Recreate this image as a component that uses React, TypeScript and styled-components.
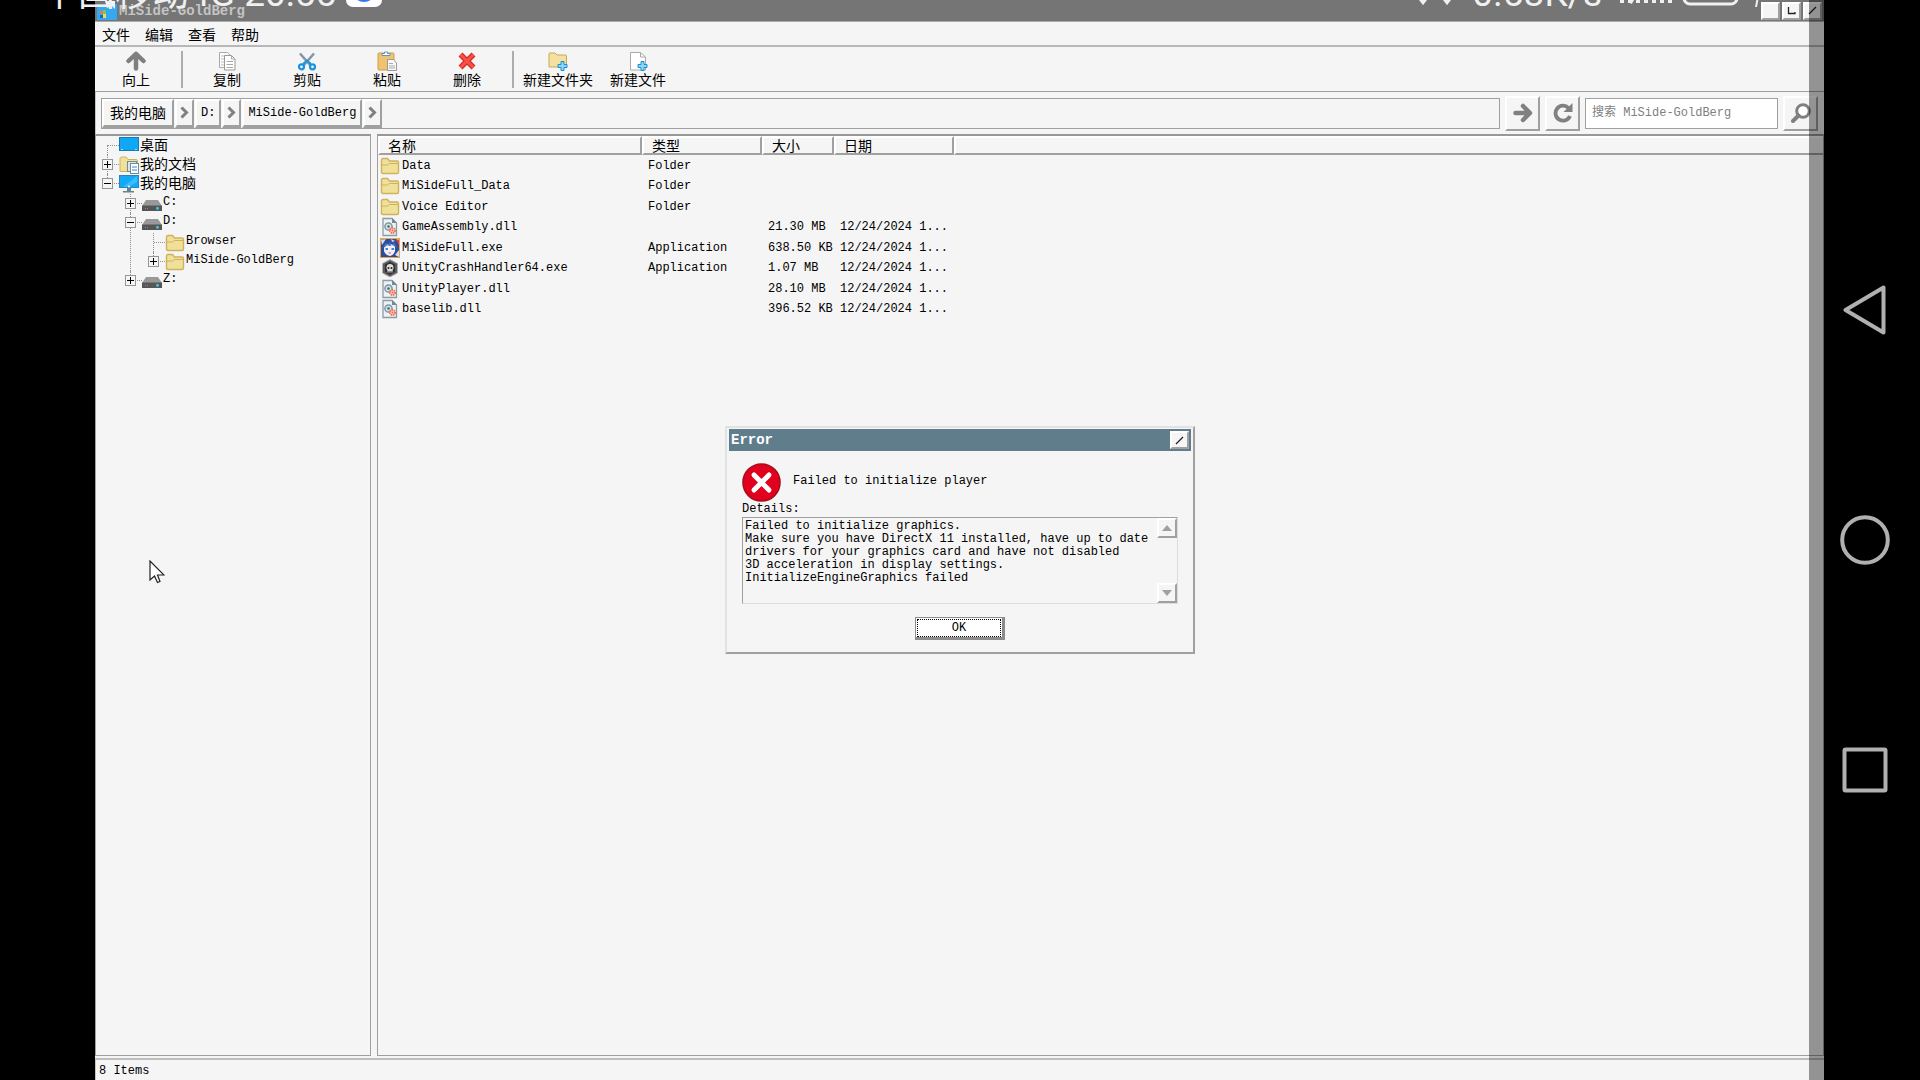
import React from "react";
import styled, { createGlobalStyle, css } from "styled-components";

const face = "#f5f5f5";
const edge = "#a0a0a0";
const latin = '"Liberation Mono", "Noto Sans CJK SC", monospace';
const han = '"Noto Sans CJK SC", "Liberation Mono", sans-serif';

const GlobalStyle = createGlobalStyle`
  *, *::before, *::after { box-sizing: border-box; }
  body { margin: 0; background: #000; color: #000; font: 12px/16px ${latin}; }
  button, input, textarea { font: inherit; color: inherit; margin: 0; border-radius: 0; }
  svg { display: block; flex: none; }
`;

const raised = css`
  background: ${face};
  border: 2px solid;
  border-color: #fff ${edge} ${edge} #fff;
`;

const Screen = styled.div`
  display: flex;
  height: 100vh;
  padding-left: 95px;
  position: relative;
  overflow: hidden;
`;

const Window = styled.main`
  flex: 1;
  min-width: 0;
  display: flex;
  flex-direction: column;
  background: ${face};
  position: relative;
`;

const EdgeShade = styled.div`
  position: absolute;
  inset: 0 0 0 auto;
  width: 15px;
  background: rgba(0, 0, 0, 0.4);
  pointer-events: none;
`;

/* Title bar */
const TitleBar = styled.header`
  display: flex;
  align-items: center;
  gap: 2px;
  height: 22px;
  padding: 0 2px;
  background: #757575;
  border-bottom: 1px solid #ababab;
`;

const TitleText = styled.h1`
  flex: 1;
  margin: 0;
  font-size: 14px;
  line-height: 16px;
  color: #c4c4c4;
`;

const CaptionButton = styled.button`
  ${raised}
  display: grid;
  place-items: center;
  width: 19px;
  height: 18px;
  padding: 0;
`;

/* Menu */
const MenuBar = styled.nav`
  display: flex;
  align-items: center;
  gap: 15px;
  height: 25px;
  padding: 0 7px;
  border-bottom: 2px solid #b8b8b8;
`;

const MenuButton = styled.button`
  padding: 0;
  border: 0;
  background: none;
  font: 14px/20px ${han};
`;

/* Toolbar */
const ToolBar = styled.div`
  display: flex;
  align-items: center;
  height: 45px;
  padding-left: 1px;
  border-bottom: 1px solid ${edge};
`;

const ToolButton = styled.button`
  display: flex;
  flex-direction: column;
  align-items: center;
  width: 80px;
  padding: 0;
  border: 0;
  background: none;
  font: 14px/16px ${han};
  white-space: nowrap;
`;

const ToolDivider = styled.div`
  width: 2px;
  height: 37px;
  margin: 0 4px 0 5px;
  background: #acacac;
`;

/* Address bar */
const AddressBar = styled.div`
  display: flex;
  align-items: center;
  gap: 5px;
  height: 42px;
  padding: 0 6px 0 5px;
  border-left: 1px solid #c4c4c4;
`;

const Crumbs = styled.div`
  flex: 1;
  display: flex;
  align-items: stretch;
  gap: 1px;
  height: 31px;
  border: 1px solid ${edge};
`;

const Crumb = styled.button<{ $han?: boolean }>`
  ${raised}
  border-bottom-width: 3px;
  padding: ${(p) => (p.$han ? "0 6px 2px" : "0 4px")};
  font-family: ${(p) => (p.$han ? han : latin)};
  font-size: ${(p) => (p.$han ? 14 : 12)}px;
  line-height: 16px;
`;

const CrumbArrow = styled.button`
  ${raised}
  border-bottom-width: 3px;
  display: grid;
  place-items: center;
  width: 19px;
  padding: 0;
`;

const SquareButton = styled.button`
  ${raised}
  display: grid;
  place-items: center;
  width: 35px;
  height: 35px;
  padding: 0;
`;

const SearchInput = styled.input`
  width: 193px;
  height: 31px;
  padding: 0 6px;
  border: 1px solid ${edge};
  background: #fff;
  outline: none;
  &::placeholder { color: #808080; opacity: 1; }
`;

/* Panes */
const Panes = styled.div`
  flex: 1;
  min-height: 0;
  display: flex;
  gap: 6px;
`;

const pane = css`
  border: 1px solid ${edge};
  border-top: 2px solid #989898;
`;

const TreePane = styled.aside`
  ${pane}
  width: 276px;
`;

const ListPane = styled.section`
  ${pane}
  flex: 1;
  min-width: 0;
`;

const TreeList = styled.ul<{ $nested?: boolean }>`
  list-style: none;
  margin: 0;
  margin-top: ${(p) => (p.$nested ? 1 : 0)}px;
  padding: 0 0 0 ${(p) => (p.$nested ? 23 : 0)}px;
`;

const TreeItem = styled.li<{ $line: "full" | "last" | "first" }>`
  position: relative;
  &::before {
    content: "";
    display: block;
    position: absolute;
    left: 11px;
    top: ${(p) => (p.$line === "first" ? 9 : 0)}px;
    bottom: ${(p) => (p.$line === "last" ? "auto" : 0)};
    height: ${(p) => (p.$line === "last" ? "10px" : "auto")};
    border-left: 1px dotted #909090;
  }
`;

const TreeRow = styled.div`
  display: flex;
  align-items: center;
  height: 19px;
`;

const Branch = styled.div`
  position: relative;
  display: grid;
  place-items: center;
  width: 23px;
  height: 19px;
  &::before {
    content: "";
    position: absolute;
    left: 12px;
    right: 0;
    top: 9px;
    border-top: 1px dotted #909090;
  }
`;

const Expander = styled.button`
  position: relative;
  display: grid;
  place-items: center;
  width: 11px;
  height: 11px;
  padding: 0;
  border: 1px solid #969696;
  background: ${face};
`;

const TreeLabel = styled.span<{ $han?: boolean }>`
  padding: 0 0 3px 1px;
  font-family: ${(p) => (p.$han ? han : latin)};
  font-size: ${(p) => (p.$han ? 14 : 12)}px;
  line-height: 16px;
`;

const FileTable = styled.table`
  width: 100%;
  table-layout: fixed;
  border-collapse: separate;
  border-spacing: 0;
`;

const HeadCell = styled.th`
  height: 19px;
  padding: 0 0 0 8px;
  border: 2px solid;
  border-color: #fff ${edge} ${edge} #fff;
  text-align: left;
  font: 14px/15px ${han};
  &:last-child { border-right: 0; }
`;

const FileRow = styled.tr`
  height: 20px;
  &:nth-child(odd) { height: 21px; }
`;

const Cell = styled.td`
  padding: 0 0 0 6px;
  white-space: nowrap;
  &:first-child { padding-left: 2px; }
`;

const FileName = styled.div`
  display: flex;
  align-items: center;
  gap: 2px;
  height: 20px;
`;

const StatusBar = styled.footer`
  height: 22px;
  margin-top: 2px;
  padding: 3px 3px 0;
  border-top: 2px solid #bebebe;
  border-left: 1px solid #c4c4c4;
  line-height: 16px;
`;

/* Error dialog */
const DialogLayer = styled.div`
  position: fixed;
  inset: 0;
  display: grid;
  place-items: center;
`;

const Dialog = styled.section`
  width: 470px;
  background: ${face};
  border: 2px solid;
  border-color: #e2e2e2 ${edge} ${edge} #e2e2e2;
  padding: 1px 2px 12px;
`;

const DialogTitle = styled.div`
  display: flex;
  align-items: center;
  justify-content: space-between;
  height: 22px;
  padding: 0 2px;
  background: #607d8b;
`;

const DialogHeading = styled.h2`
  margin: 0;
  font-size: 14px;
  line-height: 16px;
  color: #fff;
`;

const DialogBody = styled.div`
  padding: 12px 13px 0;
`;

const Message = styled.div`
  display: flex;
  gap: 12px;
  height: 39px;
`;

const MessageText = styled.p`
  margin: 0;
  padding-top: 10px;
`;

const DetailsLabel = styled.label`
  display: block;
  line-height: 15px;
`;

const DetailsBox = styled.div`
  display: flex;
  height: 87px;
  border: 1px solid;
  border-color: ${edge} #dcdcdc #dcdcdc ${edge};
`;

const DetailsText = styled.textarea`
  flex: 1;
  min-width: 0;
  padding: 2px;
  border: 0;
  background: none;
  outline: none;
  resize: none;
  overflow: hidden;
  line-height: 13px;
  white-space: pre;
`;

const Scroller = styled.div`
  display: flex;
  flex-direction: column;
  justify-content: space-between;
`;

const ScrollButton = styled.button`
  ${raised}
  display: grid;
  place-items: center;
  width: 20px;
  height: 20px;
  padding: 0;
`;

const OkButton = styled.button`
  display: block;
  width: 90px;
  height: 23px;
  margin: 13px auto 0;
  padding: 1px;
  border: 1px solid #8c8c8c;
  border-right-width: 3px;
  border-bottom-width: 3px;
  background: #fff;
`;

const OkFocus = styled.span`
  display: block;
  border: 1px dotted #000;
  line-height: 16px;
`;

/* Phone chrome */
const NavBar = styled.nav`
  display: flex;
  flex-direction: column;
  align-items: center;
  justify-content: center;
  gap: 180px;
  width: 96px;
  padding-right: 14px;
`;

const NavButton = styled.button`
  width: 50px;
  height: 50px;
  padding: 0;
  border: 0;
  background: none;
`;

const PhoneStatus = styled.div`
  position: absolute;
  top: -36px;
  left: 41px;
  right: 160px;
  height: 43px;
  display: flex;
  align-items: flex-end;
  justify-content: space-between;
  color: #f0f0f0;
  font: 37px/26px Roboto, "Noto Sans CJK SC", sans-serif;
`;

const StatusGroup = styled.div`
  display: flex;
  align-items: flex-end;
  gap: ${10}px;
`;

const SignalGroup = styled(StatusGroup)`
  gap: 18px;
`;

const PointerLayer = styled.div`
  position: absolute;
  left: 149px;
  top: 560px;
`;

const FolderIcon = () => (
  <svg width="20" height="18" viewBox="0 0 20 18">
    <path d="M1.500 15V3q0-1.500 1.500-1.500h4.500L9.500 4H17q1.500 0 1.500 1.500V15q0 1.500-1.500 1.500H3Q1.500 16.500 1.500 15Z" fill="#f0e19a" stroke="#d0b25e" strokeWidth="1.400" />
    <path d="M2 8h5.500l2-1.500H18" fill="none" stroke="#d0b25e" />
  </svg>
);

const DesktopIcon = () => (
  <svg width="20" height="17" viewBox="0 0 20 17">
    <rect x="0.500" y="0.500" width="19" height="13" fill="#10a8f4" stroke="#1979b8" />
    <path d="M2 12.500h16" stroke="#9bdcff" strokeDasharray="2 12 2" />
  </svg>
);

const DocumentsIcon = () => (
  <svg width="20" height="18" viewBox="0 0 20 18">
    <path d="M1 15.500V2.500Q1 1 3 1h4l2 2.500h8.500q1 0 1 1.500v10.500Z" fill="#f0e19a" stroke="#d0b25e" />
    <rect x="8.500" y="5.500" width="9" height="10" fill="#d8e6ee" stroke="#71899a" />
    <rect x="11.500" y="7.500" width="8" height="10" fill="#fff" stroke="#71899a" />
    <path d="M13 11h5M13 14h5" stroke="#3284b8" />
  </svg>
);

const ComputerIcon = () => (
  <svg width="20" height="18" viewBox="0 0 20 18">
    <rect x="0.500" y="0.500" width="19" height="12" fill="#13aaf4" stroke="#2786c0" />
    <path d="M18 1v6L9 12H4Z" fill="#3cbcfb" />
    <path d="M8 13h4v3h3v1.500H4V16h4Z" fill="#5f8496" />
    <circle cx="10" cy="11.500" r="1" fill="#fff" />
  </svg>
);

const DriveIcon = () => (
  <svg width="20" height="16" viewBox="0 0 20 16">
    <path d="M4 4h12l4 6H0Z" fill="#999" />
    <path d="M0 9.500h20V15H0Z" fill="#565656" />
    <path d="M3 12.500h4" stroke="#888" strokeDasharray="1 1" />
    <circle cx="15.500" cy="12.300" r="1.500" fill="#35c5e8" />
  </svg>
);

const DllIcon = () => (
  <svg width="20" height="20" viewBox="0 0 20 20">
    <path d="M3 1.500h9L16.500 6v12.500H3Z" fill="#eef2f4" stroke="#8a9da6" strokeWidth="1.300" />
    <path d="M12 1v5h5Z" fill="#718a96" />
    <circle cx="8.500" cy="9.500" r="3.600" fill="#d5e1e7" stroke="#7b98a7" strokeWidth="1.500" />
    <circle cx="8.500" cy="9.500" r="1.300" fill="#47677a" />
    <circle cx="12.500" cy="13.500" r="2.600" fill="#ffd5ca" stroke="#ef6c50" strokeWidth="1.800" strokeDasharray="1.500 0.700" />
    <circle cx="12.500" cy="13.500" r="1" fill="#ef6c50" />
  </svg>
);

const GameIcon = () => (
  <svg width="20" height="20" viewBox="0 0 20 20">
    <rect width="20" height="20" fill="#e5a64a" />
    <path d="M1 2 5 1h11l3 3v15H1Z" fill="#2b4d9d" />
    <path d="M4 8q6-4 11 0v5q-1 4-5 5-5-1-6-5Z" fill="#f9eef2" />
    <path d="m3 10 3-6 1 4 3-5 1 5 3-4 3 6-2-1-2-2-3 1-3-1-2 2Z" fill="#3f6cc4" />
    <path d="M5.500 11h2.500M11.500 11h2.500" stroke="#2d8cdf" strokeWidth="2" />
    <path d="m1 2 5-1-4 6ZM15 17l4-5v7ZM11 1l4 2-3 1Z" fill="#cfe0f8" />
    <path d="M16 2h3v5Z" fill="#df3c60" />
    <path d="M8.500 15h2.500" stroke="#d45472" />
  </svg>
);

const UnityIcon = () => (
  <svg width="20" height="20" viewBox="0 0 20 20">
    <path d="m10 1.500 7.500 4v9.500L10 19l-7.500-4V5.500Z" fill="#5b5b5b" stroke="#b0b0b0" />
    <path d="m10 4 5 2.500v7L10 17l-5-3.500v-7Z" fill="#303030" />
    <circle cx="10" cy="9.500" r="3.500" fill="#dcdcdc" />
    <path d="M7.500 12h5v2.500h-5Z" fill="#dcdcdc" />
    <circle cx="8.500" cy="10" r="1" fill="#222" />
    <circle cx="11.500" cy="10" r="1" fill="#222" />
    <path d="M9 13v2m2-2v2" stroke="#444" />
  </svg>
);

const UpIcon = () => (
  <svg width="20" height="20" viewBox="0 0 20 20">
    <path d="M10 17.500V4M2.500 10 10 2.800 17.500 10" fill="none" stroke="#808080" strokeWidth="4.500" strokeLinejoin="round" strokeLinecap="round" />
  </svg>
);

const CopyIcon = () => (
  <svg width="20" height="20" viewBox="0 0 20 20">
    <path d="M2.500 1.500h8l3 3v12h-11Z" fill="#fff" stroke="#aaa" />
    <path d="M4 5h4M4 8h3M4 11h3M4 14h3" stroke="#bbb" />
    <path d="M7.500 4.500h7l3.500 3.500v11H7.500Z" fill="#fff" stroke="#999" />
    <path d="M14.500 4.500V8H18M9.500 10.500h6.500M9.500 13.500h6.500M9.500 16.500h6.500" fill="none" stroke="#aaa" />
  </svg>
);

const CutIcon = () => (
  <svg width="20" height="20" viewBox="0 0 20 20">
    <path d="m3 2.500 10.500 12M17 2.500 6.500 14.500" stroke="#8497a5" strokeWidth="2.600" />
    <circle cx="4.500" cy="15.800" r="2.500" fill="none" stroke="#1994dc" strokeWidth="2.200" />
    <circle cx="15.500" cy="15.800" r="2.500" fill="none" stroke="#1994dc" strokeWidth="2.200" />
    <path d="m6 13 4-3.500 4 3.500" fill="none" stroke="#1994dc" strokeWidth="2" />
  </svg>
);

const PasteIcon = () => (
  <svg width="20" height="20" viewBox="0 0 20 20">
    <rect x="1" y="2" width="16" height="17" rx="1" fill="#efc36f" stroke="#cf9c48" />
    <path d="M5 4.500V2.500h2.500V1h3v1.500H13v2Z" fill="#fff" stroke="#5f94c4" />
    <path d="M10.500 8.500h6L19.500 12v7.500h-9Z" fill="#f8f8f8" stroke="#999" />
    <path d="M12 12.500h4M12 15h6M12 17h6" stroke="#aaa" />
  </svg>
);

const DeleteIcon = () => (
  <svg width="20" height="20" viewBox="0 0 20 20">
    <path d="m3.500 3.500 13 13M16.500 3.500l-13 13" stroke="#d72822" strokeWidth="5.500" />
    <path d="m3.500 3.500 13 13M16.500 3.500l-13 13" stroke="#fa5149" strokeWidth="3" />
  </svg>
);

const plusPath = "M13 10.500h3v3h3v3h-3v3h-3v-3h-3v-3h3Z";

const NewFolderIcon = () => (
  <svg width="20" height="20" viewBox="0 0 20 20">
    <path d="M1 16V3q0-1 1-1h5l2 2h8.500q1 0 1 1v11Z" fill="#f2e1a0" stroke="#c9a953" />
    <path d={plusPath} fill="#8ed5fa" stroke="#1d8ccc" />
  </svg>
);

const NewFileIcon = () => (
  <svg width="20" height="20" viewBox="0 0 20 20">
    <path d="M2.500 1.500h10L17.500 6v13h-15Z" fill="#fff" stroke="#aaa" />
    <path d="M12.500 1.500V6h5" fill="none" stroke="#aaa" />
    <path d={plusPath} fill="#8ed5fa" stroke="#1d8ccc" />
  </svg>
);

const ChevronIcon = () => (
  <svg width="9" height="13" viewBox="0 0 9 13">
    <path d="m1.500 1.500 5 5-5 5" fill="none" stroke="#808080" strokeWidth="3" />
  </svg>
);

const AppIcon = () => (
  <svg width="20" height="19" viewBox="0 0 20 19">
    <path d="M0 3h20v16H0Z" fill="#36a9ee" />
    <path d="M8 0h10v8l-3-3-5 2Z" fill="#eef6fb" />
    <path d="M3 10h3v3H3Z" fill="#e87950" />
    <path d="M6 9h3v4H6Z" fill="#77c75c" />
    <path d="M3 14h3v3H3Z" fill="#1b68c0" />
    <path d="M6 13h3v4H6Z" fill="#f4d958" />
  </svg>
);

const SlashIcon = () => (
  <svg width="9" height="9" viewBox="0 0 9 9">
    <path d="m1 8 7-7" stroke="#222" strokeWidth="1.300" />
  </svg>
);

type Node = {
  name: string;
  icon: () => React.ReactElement;
  state?: "open" | "closed";
  han?: boolean;
  children?: Node[];
};

const tree: Node[] = [
  { name: "桌面", icon: DesktopIcon, han: true },
  { name: "我的文档", icon: DocumentsIcon, state: "closed", han: true },
  {
    name: "我的电脑",
    icon: ComputerIcon,
    state: "open",
    han: true,
    children: [
      { name: "C:", icon: DriveIcon, state: "closed" },
      {
        name: "D:",
        icon: DriveIcon,
        state: "open",
        children: [
          { name: "Browser", icon: FolderIcon },
          { name: "MiSide-GoldBerg", icon: FolderIcon, state: "closed" },
        ],
      },
      { name: "Z:", icon: DriveIcon, state: "closed" },
    ],
  },
];

function Branches({ nodes, nested }: { nodes: Node[]; nested?: boolean }) {
  return (
    <TreeList $nested={nested}>
      {nodes.map((node, i) => {
        const Icon = node.icon;
        const line = i === nodes.length - 1 ? "last" : i === 0 && !nested ? "first" : "full";
        return (
          <TreeItem key={node.name} $line={line}>
            <TreeRow>
              <Branch>
                {node.state && (
                  <Expander aria-label={`${node.name} ${node.state}`}>
                    <svg width="7" height="7" viewBox="0 0 7 7">
                      <path d={node.state === "open" ? "M0 3.500h7" : "M0 3.500h7M3.500 0v7"} stroke="#000" />
                    </svg>
                  </Expander>
                )}
              </Branch>
              <Icon />
              <TreeLabel $han={node.han}>{node.name}</TreeLabel>
            </TreeRow>
            {node.children && <Branches nodes={node.children} nested />}
          </TreeItem>
        );
      })}
    </TreeList>
  );
}

const date = "12/24/2024 1...";
const files = [
  { name: "Data", type: "Folder", size: "", date: "", icon: FolderIcon },
  { name: "MiSideFull_Data", type: "Folder", size: "", date: "", icon: FolderIcon },
  { name: "Voice Editor", type: "Folder", size: "", date: "", icon: FolderIcon },
  { name: "GameAssembly.dll", type: "", size: "21.30 MB", date, icon: DllIcon },
  { name: "MiSideFull.exe", type: "Application", size: "638.50 KB", date, icon: GameIcon },
  { name: "UnityCrashHandler64.exe", type: "Application", size: "1.07 MB", date, icon: UnityIcon },
  { name: "UnityPlayer.dll", type: "", size: "28.10 MB", date, icon: DllIcon },
  { name: "baselib.dll", type: "", size: "396.52 KB", date, icon: DllIcon },
];

const editTools = [
  { label: "复制", icon: CopyIcon },
  { label: "剪贴", icon: CutIcon },
  { label: "粘贴", icon: PasteIcon },
  { label: "删除", icon: DeleteIcon },
];

const createTools = [
  { label: "新建文件夹", icon: NewFolderIcon },
  { label: "新建文件", icon: NewFileIcon },
];

const details = [
  "Failed to initialize graphics.",
  "Make sure you have DirectX 11 installed, have up to date",
  "drivers for your graphics card and have not disabled",
  "3D acceleration in display settings.",
  "InitializeEngineGraphics failed",
].join("\n");

function Tool({ label, icon: Icon }: { label: string; icon: () => React.ReactElement }) {
  return (
    <ToolButton>
      <Icon />
      {label}
    </ToolButton>
  );
}

function ErrorDialog() {
  return (
    <DialogLayer>
      <Dialog role="dialog" aria-labelledby="error-title">
        <DialogTitle>
          <DialogHeading id="error-title">Error</DialogHeading>
          <CaptionButton aria-label="Close">
            <SlashIcon />
          </CaptionButton>
        </DialogTitle>
        <DialogBody>
          <Message>
            <svg width="39" height="39" viewBox="0 0 39 39">
              <circle cx="19.500" cy="19.500" r="18.500" fill="#e2001f" stroke="#a80d1b" strokeWidth="1.600" />
              <path d="m12 12 15 15M27 12 12 27" stroke="#fff" strokeWidth="5" strokeLinecap="round" />
            </svg>
            <MessageText>Failed to initialize player</MessageText>
          </Message>
          <DetailsLabel htmlFor="details">Details:</DetailsLabel>
          <DetailsBox>
            <DetailsText id="details" readOnly value={details} />
            <Scroller>
              <ScrollButton aria-label="Scroll up">
                <svg width="10" height="6" viewBox="0 0 10 6">
                  <path d="M5 0l5 6H0Z" fill={edge} />
                </svg>
              </ScrollButton>
              <ScrollButton aria-label="Scroll down">
                <svg width="10" height="6" viewBox="0 0 10 6">
                  <path d="M0 0h10L5 6Z" fill={edge} />
                </svg>
              </ScrollButton>
            </Scroller>
          </DetailsBox>
          <OkButton>
            <OkFocus>OK</OkFocus>
          </OkButton>
        </DialogBody>
      </Dialog>
    </DialogLayer>
  );
}

export default function App() {
  return (
    <Screen>
      <GlobalStyle />
      <Window>
        <TitleBar>
          <AppIcon />
          <TitleText>MiSide-GoldBerg</TitleText>
          <CaptionButton aria-label="Minimize" />
          <CaptionButton aria-label="Maximize">
            <svg width="9" height="9" viewBox="0 0 9 9">
              <path d="M1.500 1v6.500H8V6" fill="none" stroke="#222" strokeWidth="1.300" />
            </svg>
          </CaptionButton>
          <CaptionButton aria-label="Close window">
            <SlashIcon />
          </CaptionButton>
        </TitleBar>
        <MenuBar>
          {["文件", "编辑", "查看", "帮助"].map((label) => (
            <MenuButton key={label}>{label}</MenuButton>
          ))}
        </MenuBar>
        <ToolBar>
          <Tool label="向上" icon={UpIcon} />
          <ToolDivider />
          {editTools.map((tool) => (
            <Tool key={tool.label} {...tool} />
          ))}
          <ToolDivider />
          {createTools.map((tool) => (
            <Tool key={tool.label} {...tool} />
          ))}
        </ToolBar>
        <AddressBar>
          <Crumbs>
            <Crumb $han>我的电脑</Crumb>
            <CrumbArrow aria-label="Open drives">
              <ChevronIcon />
            </CrumbArrow>
            <Crumb>D:</Crumb>
            <CrumbArrow aria-label="Open folders">
              <ChevronIcon />
            </CrumbArrow>
            <Crumb>MiSide-GoldBerg</Crumb>
            <CrumbArrow aria-label="Open subfolders">
              <ChevronIcon />
            </CrumbArrow>
          </Crumbs>
          <SquareButton aria-label="Go">
            <svg width="20" height="20" viewBox="0 0 20 20">
              <path d="M2.500 10H15M10 3l7 7-7 7" fill="none" stroke="#808080" strokeWidth="4.500" strokeLinecap="round" strokeLinejoin="round" />
            </svg>
          </SquareButton>
          <SquareButton aria-label="Refresh">
            <svg width="20" height="20" viewBox="0 0 20 20">
              <path d="M15.500 5A7.500 7.500 0 1 0 17 13" fill="none" stroke="#808080" strokeWidth="3.800" />
              <path d="M19.500 0v9h-9Z" fill="#808080" />
            </svg>
          </SquareButton>
          <SearchInput aria-label="搜索" placeholder="搜索 MiSide-GoldBerg" />
          <SquareButton aria-label="Search">
            <svg width="20" height="20" viewBox="0 0 20 20">
              <circle cx="12" cy="8" r="6.300" fill="#fff" stroke="#808080" strokeWidth="3" />
              <path d="M7.500 12.500 2 18" stroke="#808080" strokeWidth="4" strokeLinecap="round" />
            </svg>
          </SquareButton>
        </AddressBar>
        <Panes>
          <TreePane>
            <Branches nodes={tree} />
          </TreePane>
          <ListPane>
            <FileTable>
              <colgroup>
                <col style={{ width: 264 }} />
                <col style={{ width: 120 }} />
                <col style={{ width: 72 }} />
                <col style={{ width: 120 }} />
                <col />
              </colgroup>
              <thead>
                <tr>
                  <HeadCell>名称</HeadCell>
                  <HeadCell>类型</HeadCell>
                  <HeadCell>大小</HeadCell>
                  <HeadCell>日期</HeadCell>
                  <HeadCell as="td" />
                </tr>
              </thead>
              <tbody>
                {files.map(({ icon: Icon, ...file }) => (
                  <FileRow key={file.name}>
                    <Cell>
                      <FileName>
                        <Icon />
                        {file.name}
                      </FileName>
                    </Cell>
                    <Cell>{file.type}</Cell>
                    <Cell>{file.size}</Cell>
                    <Cell>{file.date}</Cell>
                    <Cell />
                  </FileRow>
                ))}
              </tbody>
            </FileTable>
          </ListPane>
        </Panes>
        <StatusBar>8 Items</StatusBar>
        <EdgeShade />
      </Window>
      <NavBar>
        <NavButton aria-label="Back">
          <svg width="50" height="50" viewBox="0 0 50 50">
            <path d="M43.500 2.500v45L5.500 25Z" fill="none" stroke="#b0b0b0" strokeWidth="4" strokeLinejoin="round" />
          </svg>
        </NavButton>
        <NavButton aria-label="Home">
          <svg width="50" height="50" viewBox="0 0 50 50">
            <circle cx="25" cy="25" r="22.800" fill="none" stroke="#b0b0b0" strokeWidth="4" />
          </svg>
        </NavButton>
        <NavButton aria-label="Recent apps">
          <svg width="50" height="50" viewBox="0 0 50 50">
            <rect x="4.500" y="4.500" width="41" height="41" rx="1" fill="none" stroke="#b0b0b0" strokeWidth="4" />
          </svg>
        </NavButton>
      </NavBar>
      <PhoneStatus>
        <StatusGroup>
          <span>中国移动4G 20:55</span>
          <svg width="36" height="36" viewBox="0 0 36 36">
            <rect width="36" height="36" rx="7" fill="#fff" />
            <circle cx="18" cy="19" r="12" fill="#3478f6" />
          </svg>
        </StatusGroup>
        <SignalGroup>
          <svg width="38" height="36" viewBox="0 0 38 36">
            <path d="M7 8v22M1 23l6 8 6-8M31 8v22M25 23l6 8 6-8" fill="none" stroke="#f0f0f0" strokeWidth="4" />
          </svg>
          <span>0.53K/s</span>
          <svg width="140" height="36" viewBox="0 0 140 36">
            <path d="M2 4v28M10 4v28M10 32l6-10M18 16v16M26 12v20M34 8v24M42 6v26M50 4v28" stroke="#f0f0f0" strokeWidth="4" />
            <rect x="64" y="10" width="53" height="23" rx="6" fill="none" stroke="#f0f0f0" strokeWidth="3" />
            <path d="m139 20-3 16" stroke="#f0f0f0" strokeWidth="2" />
          </svg>
        </SignalGroup>
      </PhoneStatus>
      <ErrorDialog />
      <PointerLayer>
        <svg width="16" height="24" viewBox="0 0 16 24">
          <path d="M1 1v19l4.500-4 3 6.500 2.500-1-2.500-6.500H15Z" fill="#fff" stroke="#222" strokeWidth="1.200" />
        </svg>
      </PointerLayer>
    </Screen>
  );
}
